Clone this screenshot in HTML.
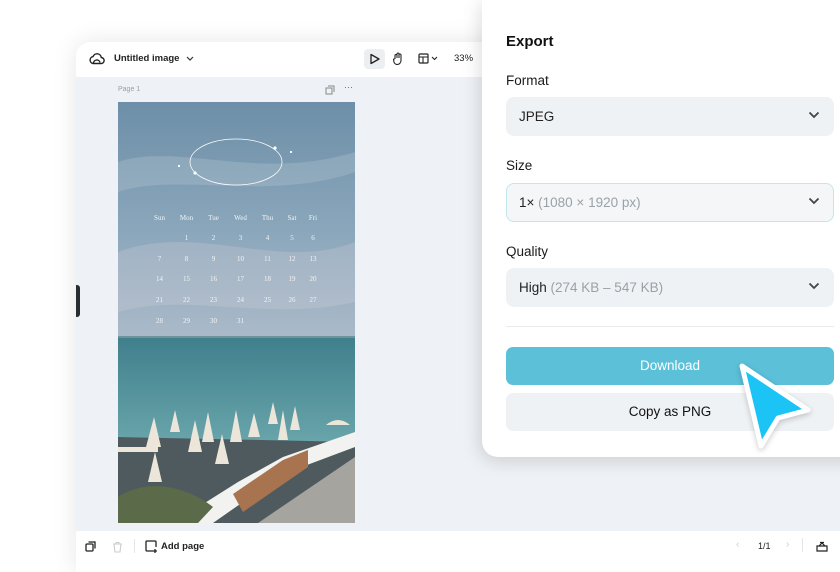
<!DOCTYPE html>
<html><head><style>
*{margin:0;padding:0;box-sizing:border-box}
body{width:840px;height:560px;overflow:hidden;background:#fff;font-family:"Liberation Sans",sans-serif;position:relative}
.abs{position:absolute}
.win{left:76px;top:42px;width:800px;height:530px;background:#fff;border-radius:14px 0 0 0;box-shadow:0 0 24px rgba(0,0,0,.10);overflow:hidden}
.canvas{left:0;top:35px;width:800px;height:454px;background:#eef1f5}
.img{left:42px;top:25px;width:237px;height:421px;overflow:hidden;background:linear-gradient(180deg,#6d8fa8 0%,#8aa6bb 30%,#a9b9c8 55%,#bcc3cf 80%,#b8c0cb 100%)}
.cal{color:#f4f4f4;font-family:"Liberation Serif",serif;font-size:7px;text-align:center}
.panel{left:482px;top:0;width:380px;height:457px;background:#fff;border-radius:0 0 0 16px;box-shadow:-2px 4px 18px rgba(0,0,0,.14)}
.lbl{font-size:13.5px;color:#1a1a1a;left:24px}
.sel{left:24px;width:328px;height:39px;background:#eff2f5;border-radius:8px;font-size:13.5px;color:#222;padding:12px 0 0 13px}
.sel .g{color:#9aa1a8}
.chev{position:absolute;right:14px;top:14px}
.btn{left:24px;width:328px;height:38px;border-radius:7px;text-align:center;font-size:13.5px;padding-top:11px}
</style></head><body>
<div class="abs win">
  <svg class="abs" style="left:13px;top:10px" width="16" height="14" viewBox="0 0 16 14"><path d="M4 11.5h8a3 3 0 0 0 .3-6A4.3 4.3 0 0 0 4 4.6 3.5 3.5 0 0 0 4 11.5z M4.5 11.5a3.3 3.3 0 0 1 6.5-1" fill="none" stroke="#222" stroke-width="1.4"/></svg>
  <div class="abs" style="left:38px;top:11px;font-size:9.5px;font-weight:bold;color:#222">Untitled image</div>
  <svg class="abs" style="left:110px;top:14px" width="8" height="6"><path d="M1 1l3 3 3-3" fill="none" stroke="#333" stroke-width="1.2"/></svg>
  <div class="abs" style="left:288px;top:7px;width:21px;height:20px;background:#eceff2;border-radius:4px"></div>
  <svg class="abs" style="left:293px;top:11px" width="12" height="12"><path d="M2 1.5l8 4.5-8 4.5z" fill="none" stroke="#222" stroke-width="1.3" stroke-linejoin="round"/></svg>
  <svg class="abs" style="left:316px;top:10px" width="12" height="13"><path d="M3 7V3.5a1 1 0 0 1 2 0V6V2a1 1 0 0 1 2 0v4V3a1 1 0 0 1 2 0v5.5a4 4 0 0 1-4 4A3.5 3.5 0 0 1 2 10L1.5 7.5a1 1 0 0 1 1.5-.5" fill="none" stroke="#222" stroke-width="1.1"/></svg>
  <svg class="abs" style="left:342px;top:11px" width="22" height="11"><rect x="1" y="1" width="9" height="9" rx="1" fill="none" stroke="#222" stroke-width="1.2"/><path d="M1 4h9M5 4v6M14 4l2.5 2.5L19 4" fill="none" stroke="#222" stroke-width="1.1"/></svg>
  <div class="abs" style="left:378px;top:11px;font-size:9.5px;color:#222">33%</div>
  <div class="abs canvas">
    <div class="abs" style="left:42px;top:9px;font-size:7px;color:#9aa0a6">Page 1</div>
    <svg class="abs" style="left:249px;top:8px" width="10" height="10"><rect x="1" y="3" width="6" height="6" fill="none" stroke="#888" stroke-width="1"/><path d="M3 1h6v6" fill="none" stroke="#888" stroke-width="1"/></svg>
    <div class="abs" style="left:268px;top:5px;font-size:9px;color:#666">···</div>
    <div class="abs img">
      <svg class="abs" style="left:0;top:0" width="237" height="421">
        <defs><linearGradient id="sea" x1="0" y1="0" x2="0" y2="1"><stop offset="0" stop-color="#3f7f8c"/><stop offset="1" stop-color="#6aa6ab"/></linearGradient></defs>
        <path d="M0 60 C60 40 140 80 237 50 L237 70 C150 100 60 70 0 90z" fill="#c6d2dc" opacity=".25"/>
        <path d="M0 150 C80 120 160 170 237 140 L237 200 C150 220 70 190 0 210z" fill="#d8d2dc" opacity=".25"/>
        <rect x="0" y="234" width="237" height="110" fill="url(#sea)"/>
        <rect x="0" y="234" width="237" height="2" fill="#6f929c"/>
        <path d="M0 335 L237 340 L237 421 L0 421z" fill="#4e5a5e"/>
        <path d="M140 421 L237 355 L237 421z" fill="#a6a49f"/>
        <g fill="#ece6da">
          <path d="M28 345l8-30 7 30z"/><path d="M52 330l5-22 5 22z"/><path d="M70 350l7-32 7 32z"/><path d="M84 340l6-30 6 30z"/><path d="M97 362l7-30 7 30z"/><path d="M112 340l6-32 6 32z"/><path d="M130 335l6-24 6 24z"/><path d="M150 322l5-22 5 22z"/><path d="M160 338l5-30 5 30z"/><path d="M172 328l5-24 5 24z"/>
          <path d="M208 323q12-10 24 0z"/>
          <path d="M0 345h40v5H0z"/><path d="M30 380l7-30 7 30z"/>
        </g>
        <path d="M55 421 L120 380 L165 355 L237 330 L237 345 L165 372 L125 400 L95 421z" fill="#f2f2f0"/>
        <path d="M115 392 L165 358 L190 348 L190 365 L125 410z" fill="#a87450"/>
        <path d="M0 395 C30 375 70 385 95 405 L80 421 L0 421z" fill="#5b6a48"/>
      </svg>
      <svg class="abs" style="left:55px;top:30px" width="130" height="55"><ellipse cx="63" cy="30" rx="46" ry="23" fill="none" stroke="#fff" stroke-width=".8"/><g fill="#fff"><circle cx="102" cy="16" r="1.6"/><circle cx="118" cy="20" r="1.1"/><circle cx="22" cy="41" r="1.6"/><circle cx="6" cy="34" r="1.1"/></g></svg>
      <div class="abs cal" style="left:28px;top:106px">
        <table style="border-spacing:0;color:#f4f4f4;font-size:7px">
          <tr style="height:20px"><td style="width:27px">Sun</td><td style="width:27px">Mon</td><td style="width:27px">Tue</td><td style="width:27px">Wed</td><td style="width:27px">Thu</td><td style="width:22px">Sat</td><td style="width:20px">Fri</td></tr>
          <tr style="height:20.6px"><td></td><td>1</td><td>2</td><td>3</td><td>4</td><td>5</td><td>6</td></tr>
          <tr style="height:20.6px"><td>7</td><td>8</td><td>9</td><td>10</td><td>11</td><td>12</td><td>13</td></tr>
          <tr style="height:20.6px"><td>14</td><td>15</td><td>16</td><td>17</td><td>18</td><td>19</td><td>20</td></tr>
          <tr style="height:20.6px"><td>21</td><td>22</td><td>23</td><td>24</td><td>25</td><td>26</td><td>27</td></tr>
          <tr style="height:20.6px"><td>28</td><td>29</td><td>30</td><td>31</td><td></td><td></td><td></td></tr>
        </table>
      </div>
    </div>
  </div>
  <svg class="abs" style="left:9px;top:499px" width="12" height="12"><rect x="1" y="3" width="7" height="7" rx="1" fill="none" stroke="#222" stroke-width="1.3"/><path d="M3.5 1h6.5v6.5" fill="none" stroke="#222" stroke-width="1.3"/></svg>
  <svg class="abs" style="left:36px;top:499px" width="11" height="12"><path d="M1 3h9M4 3V1.5h3V3M2 3l1 8h5l1-8" fill="none" stroke="#ccc" stroke-width="1.1"/></svg>
  <div class="abs" style="left:58px;top:497px;width:1px;height:14px;background:#e3e5e8"></div>
  <svg class="abs" style="left:69px;top:498px" width="13" height="13"><path d="M8 11H2a1 1 0 0 1-1-1V2a1 1 0 0 1 1-1h8a1 1 0 0 1 1 1v5M10 9v4M8 11h4" fill="none" stroke="#222" stroke-width="1.3"/></svg>
  <div class="abs" style="left:85px;top:499px;font-size:9.5px;font-weight:bold;color:#222">Add page</div>
  <div class="abs" style="left:660px;top:497px;font-size:10px;color:#ccc">‹</div>
  <div class="abs" style="left:682px;top:499px;font-size:9px;color:#222">1/1</div>
  <div class="abs" style="left:710px;top:497px;font-size:10px;color:#ccc">›</div>
  <div class="abs" style="left:726px;top:496px;width:1px;height:14px;background:#e3e5e8"></div>
  <svg class="abs" style="left:740px;top:499px" width="12" height="11"><path d="M1 5h10v5H1z M3 5l3-3 3 3M4 1.5h4" fill="none" stroke="#222" stroke-width="1.2"/></svg>
</div>
<div class="abs" style="left:76px;top:285px;width:4px;height:32px;background:#2a2d30;border-radius:0 3px 3px 0"></div>
<div class="abs panel">
  <div class="abs" style="left:24px;top:33px;font-size:15px;font-weight:bold;color:#111">Export</div>
  <div class="abs lbl" style="top:73px">Format</div>
  <div class="abs sel" style="top:97px">JPEG<svg class="chev" width="12" height="8"><path d="M1.5 1.5l4.5 4.5 4.5-4.5" fill="none" stroke="#444" stroke-width="1.8"/></svg></div>
  <div class="abs lbl" style="top:158px">Size</div>
  <div class="abs sel" style="top:183px;background:#f4f6f8;border:1px solid #c2e6ee;padding-top:11px;padding-left:12px">1× <span class="g">(1080 × 1920 px)</span><svg class="chev" style="top:13px;right:13px" width="12" height="8"><path d="M1.5 1.5l4.5 4.5 4.5-4.5" fill="none" stroke="#444" stroke-width="1.8"/></svg></div>
  <div class="abs lbl" style="top:244px">Quality</div>
  <div class="abs sel" style="top:268px">High <span class="g">(274 KB – 547 KB)</span><svg class="chev" width="12" height="8"><path d="M1.5 1.5l4.5 4.5 4.5-4.5" fill="none" stroke="#444" stroke-width="1.8"/></svg></div>
  <div class="abs" style="left:24px;top:326px;width:328px;height:1px;background:#e8eaed"></div>
  <div class="abs btn" style="top:347px;background:#5bc0d8;color:#fff">Download</div>
  <div class="abs btn" style="top:393px;background:#eff2f5;color:#111">Copy as PNG</div>
</div>
<svg class="abs" style="left:734px;top:358px" width="84" height="96"><path d="M8 8 L74 52 L44 60 L27 88 Z" fill="#1cc4f5" stroke="#fff" stroke-width="5" stroke-linejoin="round" style="filter:drop-shadow(0 2px 3px rgba(0,0,0,.2))"/></svg>
</body></html>
